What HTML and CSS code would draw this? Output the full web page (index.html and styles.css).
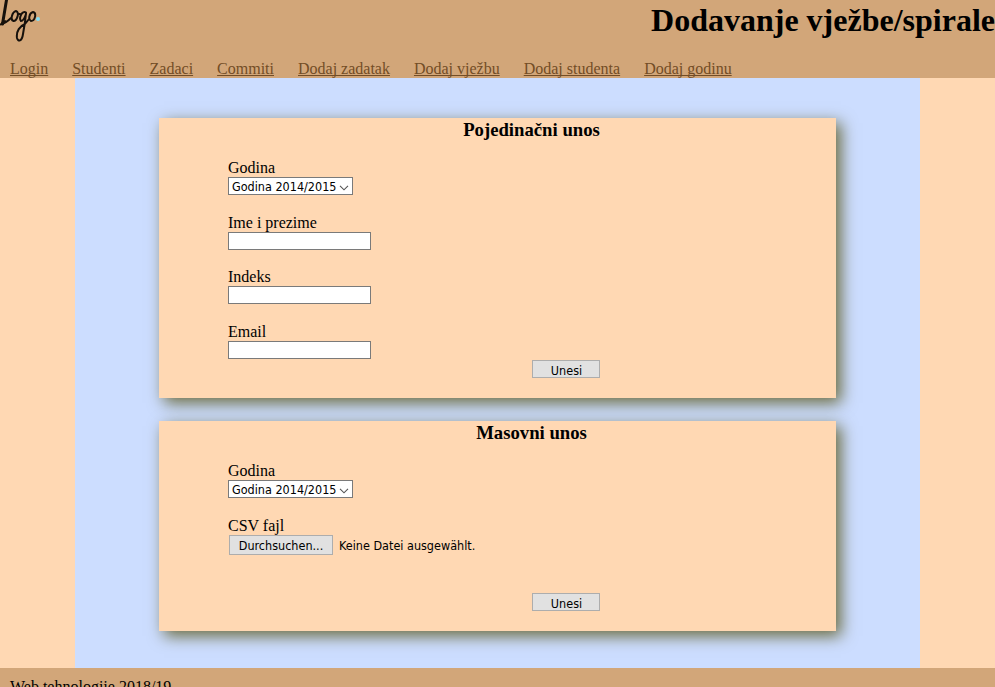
FILE: index.html
```html
<!DOCTYPE html>
<html lang="bs">
<head>
<meta charset="utf-8">
<title>Dodavanje vježbe/spirale</title>
<link rel="stylesheet" href="styles.css">
</head>
<body>
<header class="header">
  <div class="top">
    <svg class="logo" viewBox="0 0 42 42" width="42" height="42">
      <g fill="none" stroke="#16110c" stroke-linecap="round" stroke-linejoin="round">
        <path stroke-width="3" d="M6.500 0L5.500 6L4 15L2.500 24"/>
        <path stroke-width="2" d="M0 24.500C4 24 7 22 11 18M2 23L5 21M16 11C12 12 10 20 13.500 21C17 21 20 12 16 11M18 14L20 14M26 12.500C22 10 18.500 18 21 21C23 21 25 17 26 14M26 13L25 22L23 34C22 41.500 18 42 17 38C16 31 20 26 25 24L29 19M33 12C29 13 28 20 31 21C35 21 37 13 33 12"/>
      </g>
      <circle cx="38" cy="19" r="2" fill="#85dff5"/>
    </svg>
    <h1 class="title">Dodavanje vježbe/spirale</h1>
  </div>
  <nav class="nav">
    <a href="#">Login</a>
    <a href="#">Studenti</a>
    <a href="#">Zadaci</a>
    <a href="#">Commiti</a>
    <a href="#">Dodaj zadatak</a>
    <a href="#">Dodaj vježbu</a>
    <a href="#">Dodaj studenta</a>
    <a href="#">Dodaj godinu</a>
  </nav>
</header>
<main class="content">
  <form class="card single">
    <h3 class="heading">Pojedinačni unos</h3>
    <div class="field">
      <span>Godina</span>
      <div class="select"><span>Godina 2014/2015</span><svg width="10" height="6" viewBox="0 0 10 6"><path d="M1 .8L5 4.800L9 .8"/></svg></div>
    </div>
    <div class="field"><label for="ime">Ime i prezime</label><input id="ime" class="text" type="text"></div>
    <div class="field short"><label for="indeks">Indeks</label><input id="indeks" class="text" type="text"></div>
    <div class="field last"><label for="email">Email</label><input id="email" class="text" type="text"></div>
    <button class="submit" type="button">Unesi</button>
  </form>
  <form class="card bulk">
    <h3 class="heading">Masovni unos</h3>
    <div class="field">
      <span>Godina</span>
      <div class="select"><span>Godina 2014/2015</span><svg width="10" height="6" viewBox="0 0 10 6"><path d="M1 .8L5 4.800L9 .8"/></svg></div>
    </div>
    <div class="field">
      <span>CSV fajl</span>
      <div class="file"><button class="browse" type="button">Durchsuchen...</button><span class="filename">Keine Datei ausgewählt.</span></div>
    </div>
    <button class="submit" type="button">Unesi</button>
  </form>
</main>
<footer class="footer">Web tehnologije 2018/19</footer>
</body>
</html>
```
FILE: styles.css
```css
* { box-sizing: border-box; }
body {
  margin: 0;
  height: 687px;
  overflow: hidden;
  background: #ffd8b3;
  color: #000;
  font: 16px/18px "Liberation Serif", serif;
}
.header { height: 78px; background: #d2a679; }
.top { display: flex; justify-content: space-between; height: 60px; }
.logo { display: block; }
.title { margin: 2px 0 0; font-size: 32px; line-height: 36px; white-space: nowrap; }
.nav { display: flex; gap: 24px; padding-left: 10px; white-space: nowrap; }
.nav a {
  color: #734d26;
  text-decoration: underline;
  text-decoration-skip-ink: none;
}
.content {
  width: 845px;
  height: 590px;
  margin-left: 75px;
  padding: 40px 84px 0;
  background: #ccddff;
}
.card {
  display: flex;
  flex-direction: column;
  align-items: flex-start;
  width: 677px;
  padding-left: 69px;
  background: #ffd8b3;
  box-shadow: 5px 5px 15px #6b6b3e;
}
.single { height: 280px; margin-bottom: 23px; }
.bulk { height: 210px; }
.heading {
  flex: none;
  width: 100%;
  margin: 2px 0 19px;
  padding-right: 1px;
  font-size: 18.72px;
  line-height: 20px;
  text-align: center;
}
.field {
  display: flex;
  flex: none;
  flex-direction: column;
  align-items: flex-start;
  height: 55px;
  font-size: 16px;
  line-height: 18px;
}
.field.short { margin-top: -1px; }
.field.last { height: 36px; }
.select {
  display: flex;
  align-items: center;
  justify-content: space-between;
  width: 125px;
  height: 18px;
  padding: 1px 3px 0;
  border: 1px solid #7a7a7a;
  background: #fff;
}
.select svg { margin-top: 2px; fill: none; stroke: #555; stroke-width: 1.1; }
.select span, .file, .submit, .browse {
  font-family: "DejaVu Sans Condensed", "DejaVu Sans", sans-serif;
  font-stretch: condensed;
  font-size: 12.5px;
  white-space: nowrap;
}
.text {
  width: 143px;
  height: 18px;
  padding: 0 2px;
  border: 1px solid #7a7a7a;
  border-radius: 0;
  background: #fff;
}
.submit, .browse {
  border: 1px solid #adadad;
  border-radius: 0;
  background: #e1e1e1;
  color: #000;
}
.submit {
  flex: none;
  width: 68px;
  height: 18px;
  margin: auto 0 20px 304px;
  padding: 3px 0 0 1px;
  line-height: 13px;
}
.browse { width: 104px; height: 20px; padding: 2px 0 0; line-height: 16px; }
.file { display: flex; align-items: center; gap: 6px; height: 20px; padding-left: 1px; }
.filename { padding-top: 2px; }
.footer { height: 50px; padding: 10px; background: #d2a679; }
```
